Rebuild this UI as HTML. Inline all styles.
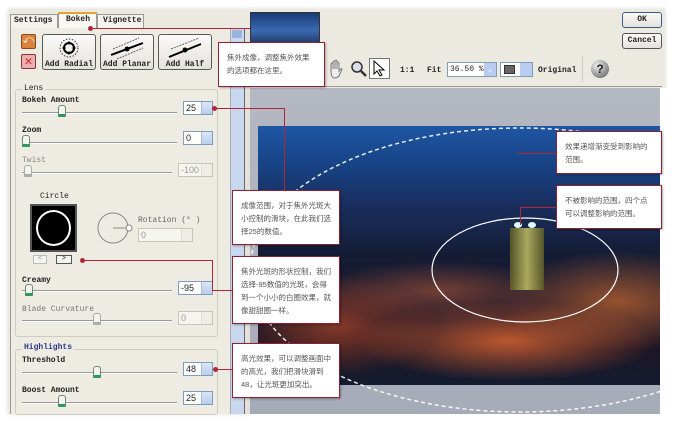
<!DOCTYPE html>
<html><head><meta charset="utf-8"><style>
*{margin:0;padding:0;box-sizing:border-box}
body{width:673px;height:422px;background:#fff;position:relative;overflow:hidden;font-family:"Liberation Mono",monospace;font-size:8px;color:#222}
.a{position:absolute}
.lbl{position:absolute;font-weight:bold;font-size:8px;font-family:"Liberation Mono",monospace}
.track{position:absolute;height:2px;border-top:1px solid #999;border-bottom:1px solid #fff}
.thumb{position:absolute;width:8px;height:12px;background:#f4f4ee;border:1px solid #6a8a7a;border-bottom:3px solid #2c9a60;border-radius:3px 3px 1px 1px}
.spin{position:absolute;height:14px;background:#fff;border:1px solid #7f9db9;font-size:9px;font-family:"Liberation Sans",sans-serif;padding-left:2px;line-height:12px}
.spin i{position:absolute;right:0;top:0;width:11px;height:12px;background:linear-gradient(#dbe6f7,#b8cdef);border-left:1px solid #a8bce0}
.spin.d{border-color:#c8c4b8;color:#999;background:#f6f5f0}
.spin.d i{background:#eeece4;border-color:#ddd}
.btn{position:absolute;background:linear-gradient(#fafaf8,#e4e2dc);border:1px solid #5a5a5a;border-radius:3px;font-weight:bold;font-size:8px;text-align:center}
.co{position:absolute;background:#fff;border:1.5px solid #8e2232;font-family:"Liberation Sans","Noto Sans CJK SC",sans-serif;font-size:7.5px;line-height:13px;color:#555;padding:8px 8px;box-shadow:1px 1px 2px rgba(0,0,0,.3)}
.ln{position:absolute;background:#b02838}
.dot{position:absolute;width:5px;height:5px;border-radius:50%;background:#b02838}
</style></head><body>
<div class="a" style="left:8px;top:9px;width:657px;height:405px;background:#ece9e0;box-shadow:0 0 4px rgba(0,0,0,.15)"></div>
<div class="a" style="left:10px;top:14px;width:48px;height:14px;border:1px solid #999;border-bottom:none;background:#f4f2ec"></div>
<div class="lbl" style="left:14px;top:16px">Settings</div>
<div class="a" style="left:58px;top:12px;width:39px;height:17px;border:1px solid #999;border-top:2px solid #e8a030;border-bottom:none;background:#f8f7f2"></div>
<div class="lbl" style="left:66px;top:15px">Bokeh</div>
<div class="a" style="left:97px;top:14px;width:47px;height:14px;border:1px solid #999;border-bottom:none;background:#f4f2ec"></div>
<div class="lbl" style="left:103px;top:16px">Vignette</div>
<div class="a" style="left:10px;top:28px;width:220px;height:386px;border-left:1px solid #999;background:#eeebe2"></div>
<div class="a" style="left:230px;top:28px;width:14px;height:386px;background:#c9d8ee;border-left:1px solid #aab"></div>
<div class="a" style="left:232px;top:30px;width:10px;height:8px;background:#9ab4dc"></div>
<div class="a" style="left:244px;top:28px;width:6px;height:386px;background:#e4e1da;border-left:1px solid #666"></div>
<div class="a" style="left:21px;top:34px;width:15px;height:15px;background:#d9833c;border:1px solid #8a4a20;border-radius:2px;color:#fff;font-size:11px;line-height:13px;text-align:center">⤺</div>
<div class="a" style="left:21px;top:54px;width:15px;height:15px;background:#e8b0b0;border:1px solid #8a3030;border-radius:2px;color:#d02020;font-size:13px;line-height:13px;text-align:center;font-weight:bold">✕</div>
<div class="btn" style="left:42px;top:34px;width:54px;height:36px"><svg width="24" height="22" style="margin-top:2px"><circle cx="12" cy="11" r="9" fill="none" stroke="#333" stroke-dasharray="1.5 1.5"/><circle cx="12" cy="11" r="5" fill="none" stroke="#000" stroke-width="2"/><circle cx="12" cy="6" r="1.5"/><circle cx="12" cy="16" r="1.5"/><circle cx="7" cy="11" r="1.5"/><circle cx="17" cy="11" r="1.5"/></svg><div style="margin-top:-2px">Add Radial</div></div>
<div class="btn" style="left:100px;top:34px;width:54px;height:36px"><svg width="40" height="22" style="margin-top:2px"><line x1="6" y1="12" x2="32" y2="1" stroke="#666" stroke-dasharray="2 1"/><line x1="4" y1="18" x2="36" y2="6" stroke="#000" stroke-width="2"/><line x1="10" y1="22" x2="36" y2="11" stroke="#666" stroke-dasharray="2 1"/><circle cx="20" cy="12" r="2.5"/></svg><div style="margin-top:-2px">Add Planar</div></div>
<div class="btn" style="left:158px;top:34px;width:54px;height:36px"><svg width="40" height="22" style="margin-top:2px"><line x1="6" y1="12" x2="34" y2="1" stroke="#666" stroke-dasharray="2 1"/><line x1="4" y1="20" x2="36" y2="7" stroke="#000" stroke-width="2"/><circle cx="20" cy="13" r="2.5"/></svg><div style="margin-top:-2px">Add Half</div></div>
<div class="a" style="left:15px;top:89px;width:203px;height:248px;border:1px solid #d0ccc0;border-radius:3px"></div>
<div class="lbl" style="left:22px;top:84px;background:#eeebe2;padding:0 2px;font-weight:normal">Lens</div>
<div class="lbl" style="left:22px;top:96px">Bokeh Amount</div>
<div class="track" style="left:22px;top:112px;width:155px"></div><div class="thumb" style="left:58px;top:105px"></div>
<div class="spin" style="left:183px;top:101px;width:30px">25<i></i></div>
<div class="lbl" style="left:22px;top:126px">Zoom</div>
<div class="track" style="left:22px;top:142px;width:155px"></div><div class="thumb" style="left:22px;top:135px"></div>
<div class="spin" style="left:183px;top:131px;width:30px">0<i></i></div>
<div class="lbl" style="left:22px;top:156px;color:#888;font-weight:normal">Twist</div>
<div class="track" style="left:22px;top:172px;width:150px"></div><div class="thumb" style="left:24px;top:165px;border-color:#aaa;border-bottom-color:#aaa"></div>
<div class="spin d" style="left:178px;top:163px;width:35px">-100<i></i></div>
<div class="lbl" style="left:40px;top:192px;font-weight:normal">Circle</div>
<div class="a" style="left:30px;top:204px;width:47px;height:48px;background:#000;border:2px solid #555"><div style="position:absolute;left:4px;top:4px;width:35px;height:36px;border:2px solid #fff;border-radius:50%"></div></div>
<svg class="a" style="left:96px;top:210px" width="40" height="36"><circle cx="17" cy="18" r="15" fill="none" stroke="#888"/><line x1="17" y1="18" x2="33" y2="18" stroke="#888"/><circle cx="33" cy="18" r="3" fill="#fff" stroke="#888"/></svg>
<div class="lbl" style="left:138px;top:216px;font-weight:normal;color:#666">Rotation (° )</div>
<div class="spin d" style="left:138px;top:228px;width:55px">0<i></i></div>
<div class="a" style="left:33px;top:255px;width:14px;height:9px;border:1px solid #bbb;background:#f4f4f0;font-size:7px;line-height:7px;text-align:center;color:#999">&lt;</div>
<div class="a" style="left:56px;top:255px;width:16px;height:9px;border:1px solid #555;background:#f4f4f0;font-size:7px;line-height:7px;text-align:center">&gt;</div>
<div class="lbl" style="left:22px;top:276px">Creamy</div>
<div class="track" style="left:22px;top:290px;width:150px"></div><div class="thumb" style="left:25px;top:284px"></div>
<div class="spin" style="left:178px;top:281px;width:35px">-95<i></i></div>
<div class="lbl" style="left:22px;top:305px;color:#777;font-weight:normal">Blade Curvature</div>
<div class="track" style="left:22px;top:320px;width:150px"></div><div class="thumb" style="left:93px;top:313px;border-color:#aaa;border-bottom-color:#aaa"></div>
<div class="spin d" style="left:178px;top:311px;width:35px">0<i></i></div>
<div class="a" style="left:15px;top:349px;width:203px;height:66px;border:1px solid #d0ccc0;border-radius:3px"></div>
<div class="lbl" style="left:22px;top:343px;background:#eeebe2;padding:0 2px;color:#2a3a8a">Highlights</div>
<div class="lbl" style="left:22px;top:356px">Threshold</div>
<div class="track" style="left:22px;top:372px;width:155px"></div><div class="thumb" style="left:93px;top:366px"></div>
<div class="spin" style="left:183px;top:362px;width:30px">48<i></i></div>
<div class="lbl" style="left:22px;top:386px">Boost Amount</div>
<div class="track" style="left:22px;top:402px;width:155px"></div><div class="thumb" style="left:58px;top:395px"></div>
<div class="spin" style="left:183px;top:391px;width:30px">25<i></i></div>
<div class="a" style="left:250px;top:12px;width:70px;height:37px;border:1px solid #333;background:linear-gradient(#1a3a78,#3a6ab0 50%,#1a2a50)"></div>
<div class="a" style="left:250px;top:86px;width:412px;height:1px;background:#999"></div>
<svg class="a" style="left:327px;top:59px" width="18" height="20"><path d="M4 12 L4 5 Q5 3 6 5 L6 10 L6 3 Q7 1 8 3 L8 10 L8 2 Q9 0 10 2 L10 10 L10 4 Q11 2 12 4 L12 12 Q14 9 15 10 L12 17 Q10 19 7 19 Q4 18 4 12Z" fill="#eee" stroke="#777"/></svg>
<svg class="a" style="left:350px;top:60px" width="18" height="18"><circle cx="7" cy="7" r="5" fill="#dde" stroke="#333" stroke-width="1.5"/><line x1="11" y1="11" x2="16" y2="16" stroke="#333" stroke-width="2.5"/></svg>
<div class="a" style="left:369px;top:58px;width:21px;height:21px;border:1px solid #777;background:#fff"></div>
<svg class="a" style="left:372px;top:60px" width="16" height="17"><path d="M2 1 L2 14 L5 11 L8 16 L10 15 L7 10 L12 10 Z" fill="#fff" stroke="#000"/></svg>
<div class="lbl" style="left:400px;top:66px">1:1</div>
<div class="lbl" style="left:427px;top:66px">Fit</div>
<div class="a" style="left:447px;top:62px;width:50px;height:15px;border:1px solid #7f9db9;background:#fff;font-size:8px;line-height:13px;padding-left:2px">36.50 %<span style="position:absolute;right:0;top:0;width:12px;height:13px;background:#b8cdef;color:#fff;text-align:center">⌄</span></div>
<div class="a" style="left:500px;top:62px;width:33px;height:15px;border:1px solid #7f9db9;background:#fff"><span style="position:absolute;left:3px;top:2px;width:11px;height:9px;background:#666;border:1px solid #333"></span><span style="position:absolute;right:0;top:0;width:12px;height:13px;background:#b8cdef"></span></div>
<div class="lbl" style="left:538px;top:66px">Original</div>
<div class="a" style="left:582px;top:56px;width:1px;height:26px;background:#ccc"></div>
<div class="a" style="left:591px;top:60px;width:18px;height:18px;border-radius:50%;background:radial-gradient(circle at 35% 30%,#eee,#555);color:#222;font-weight:bold;font-size:12px;line-height:18px;text-align:center;font-family:'Liberation Sans'">?</div>
<div class="btn" style="left:622px;top:12px;width:40px;height:16px;line-height:13px;border-color:#3a5a8a">OK</div>
<div class="btn" style="left:622px;top:33px;width:40px;height:16px;line-height:13px;border-color:#555">Cancel</div>
<div class="a" style="left:250px;top:88px;width:410px;height:326px;background:linear-gradient(#b4b8c2,#a6abb8)"></div>
<div class="a" style="left:258px;top:126px;width:402px;height:259px;overflow:hidden;background:
radial-gradient(ellipse 150px 40px at 250px 215px,rgba(240,110,50,.75),transparent),
radial-gradient(ellipse 120px 50px at 360px 175px,rgba(230,120,50,.6),transparent),
radial-gradient(ellipse 100px 50px at 80px 200px,rgba(200,80,40,.6),transparent),
radial-gradient(ellipse 120px 30px at 180px 165px,rgba(200,100,60,.5),transparent),
linear-gradient(#1f56a4 0%,#174487 14%,#1a2f60 30%,#141c34 50%,#20182a 70%,#1c1424 85%,#141c30 100%)">
<div style="position:absolute;left:252px;top:102px;width:34px;height:62px;background:linear-gradient(90deg,#5a5a28,#b8b860,#5a5a28);opacity:.9"></div>
<div style="position:absolute;left:256px;top:96px;width:8px;height:6px;background:#dff;border-radius:50%"></div>
<div style="position:absolute;left:270px;top:96px;width:8px;height:6px;background:#dff;border-radius:50%"></div>
</div>
<svg class="a" style="left:0;top:0" width="673" height="422"><ellipse cx="520" cy="270" rx="270" ry="142" fill="none" stroke="#fff" stroke-width="1.5" stroke-dasharray="4 3" opacity=".9"/><ellipse cx="525" cy="270" rx="93" ry="52" fill="none" stroke="#fff" stroke-width="1.2"/></svg>
<div class="a" style="left:660px;top:88px;width:13px;height:334px;background:#fff"></div>
<div class="a" style="left:250px;top:414px;width:423px;height:8px;background:#fff"></div>
<div class="dot" style="left:88px;top:26px"></div><div class="ln" style="left:90px;top:28px;width:160px;height:1px"></div>
<div class="co" style="left:218px;top:42px;width:107px;height:45px">焦外成像，调整焦外效果的选项都在这里。</div>
<div class="dot" style="left:212px;top:106px"></div><div class="ln" style="left:214px;top:108px;width:70px;height:1px"></div><div class="ln" style="left:284px;top:108px;width:1px;height:82px"></div>
<div class="co" style="left:232px;top:190px;width:108px;height:55px">成像范围，对于焦外光斑大小控制的滑块，在此我们选择25的数值。</div>
<div class="dot" style="left:80px;top:258px"></div><div class="ln" style="left:82px;top:260px;width:130px;height:1px"></div><div class="ln" style="left:212px;top:260px;width:1px;height:30px"></div><div class="ln" style="left:212px;top:290px;width:20px;height:1px"></div>
<div class="co" style="left:232px;top:256px;width:108px;height:68px">焦外光斑的形状控制，我们选择-95数值的光斑，会得到一个小小的白圈效果，就像甜甜圈一样。</div>
<div class="dot" style="left:213px;top:367px"></div><div class="ln" style="left:215px;top:369px;width:17px;height:1px"></div>
<div class="co" style="left:232px;top:343px;width:108px;height:55px">高光效果，可以调整画面中的高光，我们把滑块滑到48，让光斑更加突出。</div>
<div class="ln" style="left:518px;top:153px;width:38px;height:1px"></div>
<div class="co" style="left:556px;top:131px;width:106px;height:43px">效果递增渐变受到影响的范围。</div>
<div class="ln" style="left:520px;top:207px;width:36px;height:1px"></div><div class="ln" style="left:520px;top:207px;width:1px;height:18px"></div>
<div class="co" style="left:556px;top:185px;width:106px;height:44px">不被影响的范围，四个点可以调整影响的范围。</div>
</body></html>
